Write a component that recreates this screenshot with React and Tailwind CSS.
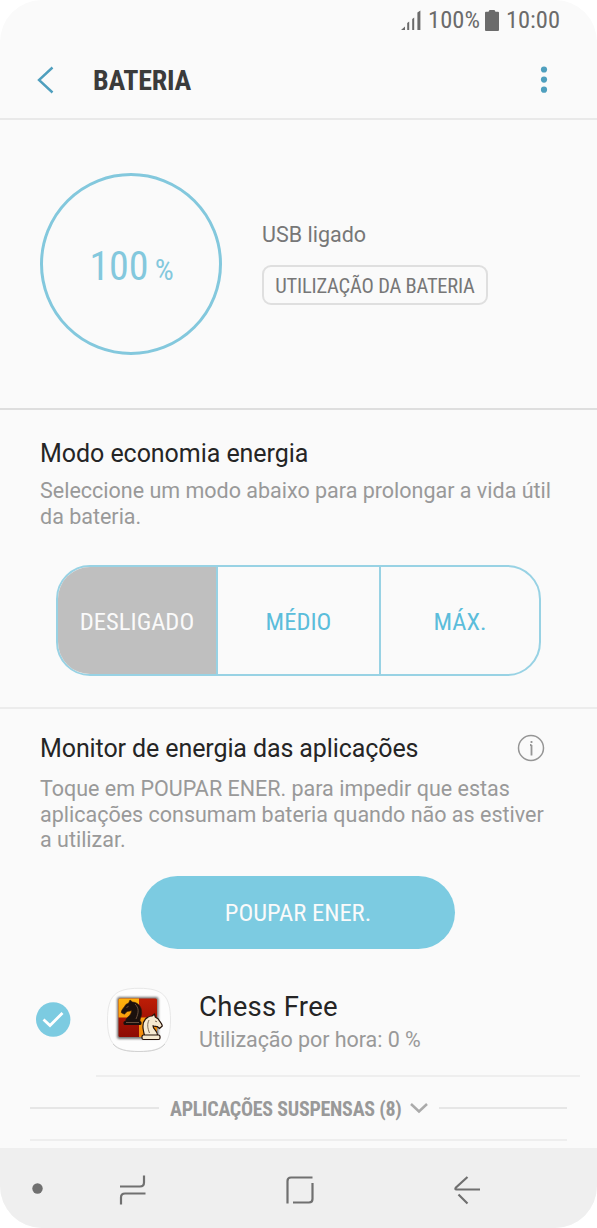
import React from "react";

function SignalIcon() {
  return (
    <svg width="22" height="22" viewBox="0 0 22 22" fill="#6b6b6b">
      <path d="M1 21l4-3.5V21zM7.2 14l2-1.6V21h-2zM12.2 10l2-1.6V21h-2zM17.4 3.5l3-2V21h-3z" />
    </svg>
  );
}

function BatteryIcon() {
  return (
    <svg width="14" height="21" viewBox="0 0 14 21" fill="#6b6b6b">
      <path d="M4.500 0h5l1 1.800H13a1 1 0 0 1 1 1V20a1 1 0 0 1-1 1H1a1 1 0 0 1-1-1V2.800a1 1 0 0 1 1-1h2.500z" />
    </svg>
  );
}

function ChessIcon() {
  return (
    <svg width="66" height="66" viewBox="0 0 66 66">
      <defs>
        <linearGradient id="red" x1="0" y1="0" x2="0" y2="1">
          <stop offset="0" stopColor="#bd1d06" />
          <stop offset="1" stopColor="#8d0b03" />
        </linearGradient>
        <linearGradient id="gold" x1="0" y1="0" x2="0" y2="1">
          <stop offset="0" stopColor="#ffb20c" />
          <stop offset="1" stopColor="#f38a0d" />
        </linearGradient>
        <filter id="soft" x="-20%" y="-20%" width="140%" height="140%">
          <feGaussianBlur stdDeviation="0.8" />
        </filter>
      </defs>
      <path
        d="M33 1.300C57 1.300 64.500 9 64.500 33S57 64.500 33 64.500 1.500 57 1.500 33 9 1.300 33 1.300z"
        fill="#fdfdfd"
        stroke="#e8e8e8"
        strokeWidth="1"
      />
      <path d="M7 57c5 6 14 7.500 26 7.500s21-1.500 26-7.500" fill="none" stroke="#d2d2d2" strokeWidth="1" />
      <rect x="11" y="10" width="41.500" height="42" rx="2.500" fill="#777" filter="url(#soft)" />
      <rect x="12.500" y="11.500" width="38.500" height="38.500" rx="1.500" fill="url(#red)" />
      <path d="M14 11.500H33V30.500H12.500V13a1.500 1.500 0 0 1 1.500-1.500zM33 30.500h18V50H33z" fill="url(#gold)" />
      <path
        d="M19.500 34.500c0-3 2-4 4-6 1.500-2 2-3 2-5-2 1-4 .5-5 1.500l-2 2.200-3.200-1.500c-.3-3 3-5 4-7.500 1-1.500 3-1.500 3.500-2.500L24 13l2.500 2c6 .5 9.500 5 9.200 11.500-.1 3-1.700 4.500-1.700 8z"
        fill="#1b100d"
        stroke="#38190b"
        strokeWidth=".6"
      />
      <rect x="17.500" y="34" width="18" height="4" rx="1.500" fill="#1b100d" />
      <path d="M20.500 20.500l2-1.200M20 35.500h13M29 17c4 4 4 8 1 15" stroke="#8c6b53" strokeWidth=".7" fill="none" />
      <path
        d="M38.500 48.500c-1.500-6-3-12 1-16.500 2-2 4-3 6.500-3l2.500-2 .8 3 3 2c1 2.500 4 4.500 4 7L53.500 41.500l-2-1.800c-1.500-.4-3-.2-4.500-1 0 4 4.500 4 4.500 9.800z"
        fill="#f6ead1"
        stroke="#251209"
        strokeWidth="1.200"
        strokeLinejoin="round"
      />
      <rect x="36" y="48" width="18" height="4.500" rx="1.500" fill="#f6ead1" stroke="#251209" strokeWidth="1.200" />
      <path d="M49 34l2 .8M43 33c-2 4-1.500 8 .5 13" stroke="#4d3524" strokeWidth=".7" fill="none" />
    </svg>
  );
}

function Mode({ label, className }) {
  return (
    <button className={"flex items-center justify-center pt-[3px] text-[24.600px] " + className}>
      <span className="cond">{label}</span>
    </button>
  );
}

export default function App() {
  return (
    <div className="h-[1228px] w-[597px] bg-white font-['Roboto',sans-serif]">
      <style>{`.cond{font-family:"Roboto Condensed","Roboto",sans-serif;font-stretch:75%;white-space:nowrap}`}</style>
      <div className="flex h-[1228px] flex-col overflow-hidden rounded-[42px] bg-[#fafafa]">
        <div className="flex h-10 shrink-0 items-center justify-end pr-[37px] text-[24.5px] leading-10 text-[#6b6b6b]">
          <SignalIcon />
          <span className="cond ml-1.5">100%</span>
          <span className="mr-[7px] ml-[5px]"><BatteryIcon /></span>
          <span className="cond">10:00</span>
        </div>

        <header className="flex h-20 shrink-0 items-center border-b-2 border-[#e9e9e9] pl-9">
          <svg className="mt-0.5" width="20" height="28" viewBox="0 0 20 28" fill="none" stroke="#4f9fbe" strokeWidth="2.400">
            <path d="M16.500 1.500L3 14l13.500 12.500" />
          </svg>
          <h1 className="cond ml-[37px] pt-1 text-[28px] leading-[28px] font-bold tracking-[-0.25px] text-[#3b3b3b]">BATERIA</h1>
          <svg className="mr-[49px] ml-auto" width="8" height="28" viewBox="0 0 8 28" fill="#4f9fbe">
            <circle cx="4" cy="4.500" r="3.100" />
            <circle cx="4" cy="14.600" r="3.100" />
            <circle cx="4" cy="24.700" r="3.100" />
          </svg>
        </header>

        <section className="flex h-[290px] shrink-0 border-b-2 border-[#dedede] pt-[52px] pl-10">
          <div className="mt-px flex h-[182px] w-[182px] items-baseline justify-center rounded-full border-[3.5px] border-[#83c8dd] text-[#83c8dd]">
            <span className="cond ml-px text-[40px] leading-[181px]">100</span>
            <span className="cond ml-1.5 text-[30px]">%</span>
          </div>
          <div className="ml-10 pt-[50px] text-[#777]">
            <p className="text-[21.500px] leading-[26px]">USB ligado</p>
            <button className="mt-[17px] flex h-10 w-[226px] items-center justify-center rounded-[9px] border-2 border-[#dfdfdf] pt-0.5 text-[20.5px] tracking-[-0.200px]">
              <span className="cond">UTILIZAÇÃO DA BATERIA</span>
            </button>
          </div>
        </section>

        <section className="h-[299px] shrink-0 border-b-2 border-[#ececec] pt-7">
          <h2 className="pl-10 text-[25px] leading-[32px] tracking-[-0.050px] text-[#252525]">Modo economia energia</h2>
          <p className="mt-2 pl-10 text-[21.500px] leading-[25.500px] whitespace-nowrap text-[#999]">
            Seleccione um modo abaixo para prolongar a vida útil<br />da bateria.
          </p>
          <div className="mt-9 ml-14 flex h-[111px] w-[485px] overflow-hidden rounded-[34px] border-2 border-[#98d2e4]">
            <Mode label="DESLIGADO" className="w-[160px] border-r-2 border-[#98d2e4] bg-[#bfbfbf] text-[#fafafa]" />
            <Mode label="MÉDIO" className="w-[163px] border-r-2 border-[#98d2e4] text-[#5bbddb]" />
            <Mode label="MÁX." className="flex-1 text-[#5bbddb]" />
          </div>
        </section>

        <section className="flex h-[439px] shrink-0 flex-col">
          <div className="mt-6 flex items-center pr-[52px] pl-10">
            <h2 className="text-[25px] leading-[32px] tracking-[-0.100px] text-[#252525]">Monitor de energia das aplicações</h2>
            <svg className="-mt-0.5 ml-auto" width="28" height="28" viewBox="0 0 28 28" fill="none" stroke="#959595">
              <circle cx="14" cy="14" r="12.500" strokeWidth="1.500" />
              <path d="M14.500 11V21.500M13 11H14.500M14.500 7v2" strokeWidth="1.800" />
            </svg>
          </div>
          <p className="mt-[11px] pl-10 text-[21.500px] leading-[25.500px] whitespace-nowrap text-[#999]">
            Toque em POUPAR ENER. para impedir que estas<br />aplicações consumam bateria quando não as estiver<br />a utilizar.
          </p>
          <button className="mt-[23px] ml-[141px] flex h-[73px] w-[314px] shrink-0 items-center justify-center rounded-full bg-[#7ccbe1] pt-0.5 text-[24.600px] text-[#fafafa]">
            <span className="cond">POUPAR ENER.</span>
          </button>
          <div className="mt-[38px] ml-9 flex h-[66px] shrink-0 items-center">
            <svg width="35" height="35" viewBox="0 0 35 35">
              <circle cx="17.200" cy="17.500" r="17.200" fill="#7ccbe1" />
              <path d="M7.500 17.500l6.500 6L26.500 11" fill="none" stroke="#fff" strokeWidth="2.800" />
            </svg>
            <div className="ml-[35px]"><ChessIcon /></div>
            <div className="ml-[27px] pt-[7px]">
              <p className="text-[27.500px] leading-[34px] tracking-[0.300px] text-[#252525]">Chess Free</p>
              <p className="text-[21.500px] leading-[32px] tracking-[-0.050px] text-[#999]">Utilização por hora: 0 %</p>
            </div>
          </div>
          <div className="mt-[22px] ml-24 h-0.5 w-[484px] shrink-0 bg-[#eee]" />
          <div className="mx-[30px] flex h-[62px] shrink-0 items-center">
            <div className="h-0.5 w-[129px] shrink-0 bg-[#e6e6e6]" />
            <span className="cond ml-[11px] pt-0.5 text-[20px] font-bold tracking-[-0.260px] text-[#999]">APLICAÇÕES SUSPENSAS (8)</span>
            <svg className="ml-auto shrink-0" width="18" height="12" viewBox="0 0 18 12" fill="none" stroke="#aaa" strokeWidth="2.500">
              <path d="M1 2l8 7.500L17 2" />
            </svg>
            <div className="ml-[11px] h-0.5 w-[128px] shrink-0 bg-[#e6e6e6]" />
          </div>
          <div className="mx-[30px] h-0.5 shrink-0 bg-[#eee]" />
        </section>

        <nav className="h-20 shrink-0 bg-[#efefef]">
          <svg width="597" height="80" viewBox="0 0 597 80" fill="none" stroke="#707070" strokeWidth="2.200">
            <circle cx="37.500" cy="40.500" r="5.200" fill="#707070" stroke="none" />
            <path d="M120 38.500h20q4 0 4-4V27.500M145.500 45.500H125q-4 0-4 4V56.500" />
            <path d="M312.500 29.500H291q-3.500 0-3.500 3.500V55.500M293 54.500h16q3.500 0 3.500-3.500V35" />
            <path d="M467.500 29L456 39.500q-1.500 2 .5 2H480M458.500 46.500l9 9" />
          </svg>
        </nav>
      </div>
    </div>
  );
}
